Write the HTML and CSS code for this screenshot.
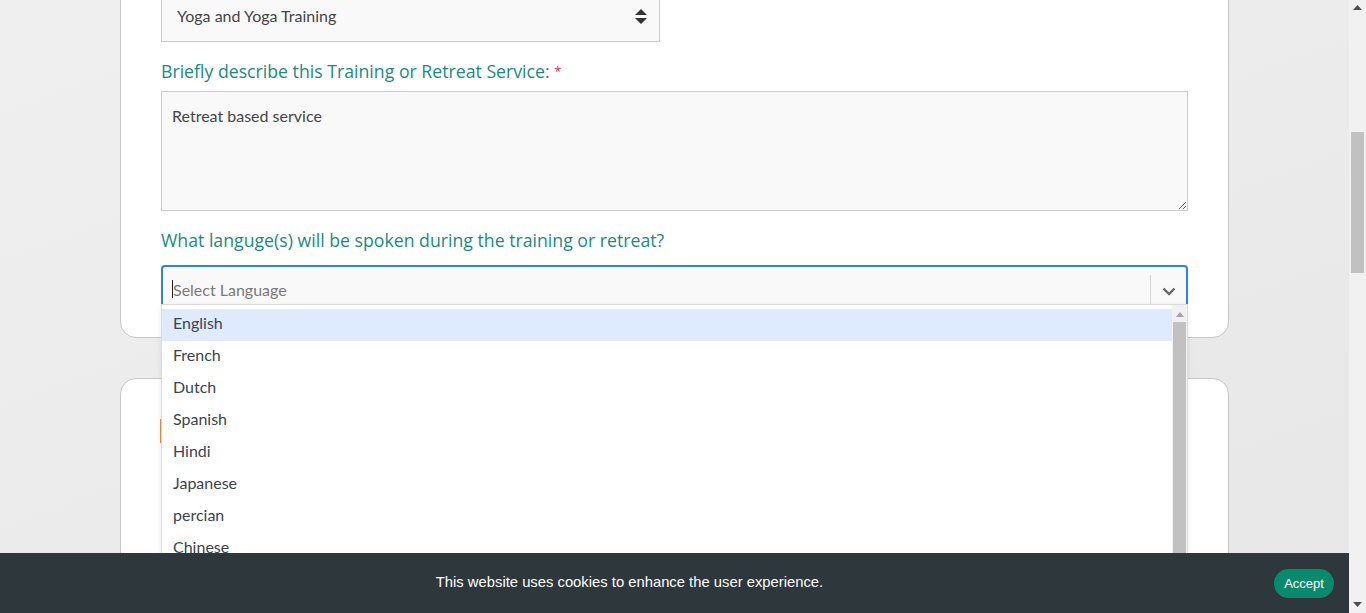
FILE: index.html
```html
<!DOCTYPE html>
<html lang="en">
<head>
<meta charset="utf-8">
<title>Training form</title>
<link rel="stylesheet" href="styles.css">
</head>
<body>
<div class="viewport">
  <main class="page">
    <section class="card card-top">
      <div class="select-box">
        <span class="select-text">Yoga and Yoga Training</span>
        <svg class="updown" width="12" height="16" viewBox="0 0 12 16"><path d="M6 0 L12 6 L0 6 Z M0 9 L12 9 L6 15 Z" fill="#333"/></svg>
      </div>
      <div class="field-label">Briefly describe this Training or Retreat Service: <span class="req">*</span></div>
      <textarea class="textarea" readonly>Retreat based service</textarea>
      <div class="field-label q2">What languge(s) will be spoken during the training or retreat?</div>
      <div class="ms">
        <div class="ms-control">
          <div class="ms-value"><span class="caret"></span><span class="placeholder">Select Language</span></div>
          <div class="ms-sep"></div>
          <div class="ms-ind">
            <svg width="14" height="9" viewBox="0 0 14 9"><path d="M1.5 1.5 L7 7 L12.5 1.5" fill="none" stroke="#666" stroke-width="2.4"/></svg>
          </div>
        </div>
        <div class="ms-menu">
          <ul class="ms-list">
            <li class="opt focused">English</li>
            <li class="opt">French</li>
            <li class="opt">Dutch</li>
            <li class="opt">Spanish</li>
            <li class="opt">Hindi</li>
            <li class="opt">Japanese</li>
            <li class="opt">percian</li>
            <li class="opt">Chinese</li>
            <li class="opt">Arabic</li>
          </ul>
          <div class="mini-scroll">
            <svg class="mini-up" width="8" height="5" viewBox="0 0 8 5"><path d="M4 0 L8 5 L0 5 Z" fill="#a3a3a3"/></svg>
            <div class="mini-thumb"></div>
          </div>
        </div>
      </div>
    </section>
    <section class="card card-next">
      <div class="section-mark"></div>
    </section>
  </main>
  <div class="page-scroll">
    <svg class="ps-up" width="9" height="5" viewBox="0 0 9 5"><path d="M4.5 0 L9 5 L0 5 Z" fill="#505050"/></svg>
    <div class="ps-thumb"></div>
    <svg class="ps-down" width="9" height="5" viewBox="0 0 9 5"><path d="M0 0 L9 0 L4.5 5 Z" fill="#505050"/></svg>
  </div>
</div>
<div class="cookie">
  <p class="cookie-text">This website uses cookies to enhance the user experience.</p>
  <button class="accept">Accept</button>
</div>
</body>
</html>
```

FILE: styles.css
```css
* { box-sizing: border-box; }
html, body { margin: 0; padding: 0; }
body {
  font-family: "Lato", "Liberation Sans", sans-serif;
  background: #ebebeb;
  overflow: hidden;
}
.viewport {
  height: 613px;
  display: flex;
  overflow: hidden;
  background: linear-gradient(160deg, #efefef 0%, #ececec 40%, #e9e9e9 70%, #e7e7e7 100%);
}
.page {
  flex: 1;
  min-width: 0;
}
.card {
  width: 1109px;
  margin: 0 auto;
  background: #fff;
  border: 1px solid #c6c6c6;
  border-radius: 16px;
  padding: 40px 40px 26px;
}
.card-top { margin-top: -49px; }
.card-next {
  margin-top: 40px;
  height: 400px;
}
.section-mark {
  width: 3px;
  height: 24px;
  margin-left: -1px;
  background: #e8873a;
}
.select-box {
  width: 499px;
  height: 50px;
  border: 1px solid #cbcbcb;
  background: #f9f9f9;
  display: flex;
  align-items: center;
  justify-content: space-between;
  padding: 0 12px 0 15px;
}
.select-text {
  font-size: 16px;
  line-height: 18px;
  color: #454545;
  margin-top: -3px;
}
.updown { display: block; }
.field-label {
  font-family: "Open Sans", "Liberation Sans", sans-serif;
  font-size: 17.7px;
  line-height: 22px;
  color: #1a8b80;
  margin: 18px 0 9px;
}
.field-label.q2 { margin: 18px 0 14px; }
.req { color: #e2264d; font-size: 13px; vertical-align: top; }
.textarea {
  display: block;
  width: 1027px;
  height: 120px;
  border: 1px solid #cbcbcb;
  background: #f9f9f9;
  padding: 14px 10px 12px;
  margin: 0;
  font-family: "Lato", "Liberation Sans", sans-serif;
  font-size: 16px;
  line-height: 20px;
  color: #454545;
  resize: both;
  outline: none;
}
.ms { position: relative; }
.ms-control {
  height: 46px;
  border: 2px solid #2f80f5;
  border-radius: 4px;
  background: #f9f9f9;
  display: flex;
  align-items: stretch;
}
.ms-value {
  flex: 1;
  display: flex;
  align-items: center;
  padding-left: 9px;
  padding-top: 2px;
}
.caret {
  width: 1px;
  height: 18px;
  background: #222;
}
.placeholder {
  font-size: 16px;
  color: #7a7a7a;
}
.ms-sep {
  width: 1px;
  background: #d6d6d6;
  margin: 8px 0 0;
}
.ms-ind {
  width: 35px;
  display: flex;
  align-items: center;
  justify-content: center;
  padding-top: 6px;
}
.ms-ind svg { display: block; }
.ms-menu {
  position: absolute;
  top: 39px;
  left: 0;
  right: 0;
  height: 300px;
  background: #fff;
  border: 1px solid #dcdcdc;
  display: flex;
  box-shadow: 0 2px 6px rgba(0,0,0,0.08);
}
.ms-list {
  list-style: none;
  margin: 0;
  padding: 4px 0 0;
  flex: 1;
}
.opt {
  height: 32px;
  line-height: 28px;
  padding-left: 11px;
  font-size: 16px;
  color: #3b4450;
}
.opt.focused { background: #deebff; }
.mini-scroll {
  width: 15px;
  background: #f1f1f1;
  display: flex;
  flex-direction: column;
  align-items: center;
  padding-top: 7px;
}
.mini-up { display: block; }
.mini-thumb {
  width: 13px;
  margin-top: 5px;
  flex: 1;
  background: #c1c1c1;
}
.page-scroll {
  width: 17px;
  background: #f1f1f1;
  display: flex;
  flex-direction: column;
  align-items: center;
  padding-top: 5px;
}
.ps-up, .ps-down { display: block; }
.ps-thumb {
  width: 13px;
  height: 141px;
  margin-top: 122px;
  background: #c1c1c1;
}
.ps-down { margin-top: auto; margin-bottom: 6px; }
.cookie {
  position: fixed;
  left: 0;
  right: 17px;
  bottom: 0;
  height: 60px;
  background: #2d373c;
  display: flex;
  align-items: center;
  gap: 15px;
  padding-right: 15px;
}
.cookie-text {
  flex: 1;
  margin: 0 0 3px;
  text-align: center;
  font-family: "Liberation Sans", Arial, sans-serif;
  font-size: 14.8px;
  color: #fff;
}
.accept {
  width: 60px;
  height: 29px;
  border: 0;
  border-radius: 15px;
  background: #0a8a6d;
  color: #fff;
  font-family: "Liberation Sans", Arial, sans-serif;
  font-size: 13px;
  padding: 0;
}
```
